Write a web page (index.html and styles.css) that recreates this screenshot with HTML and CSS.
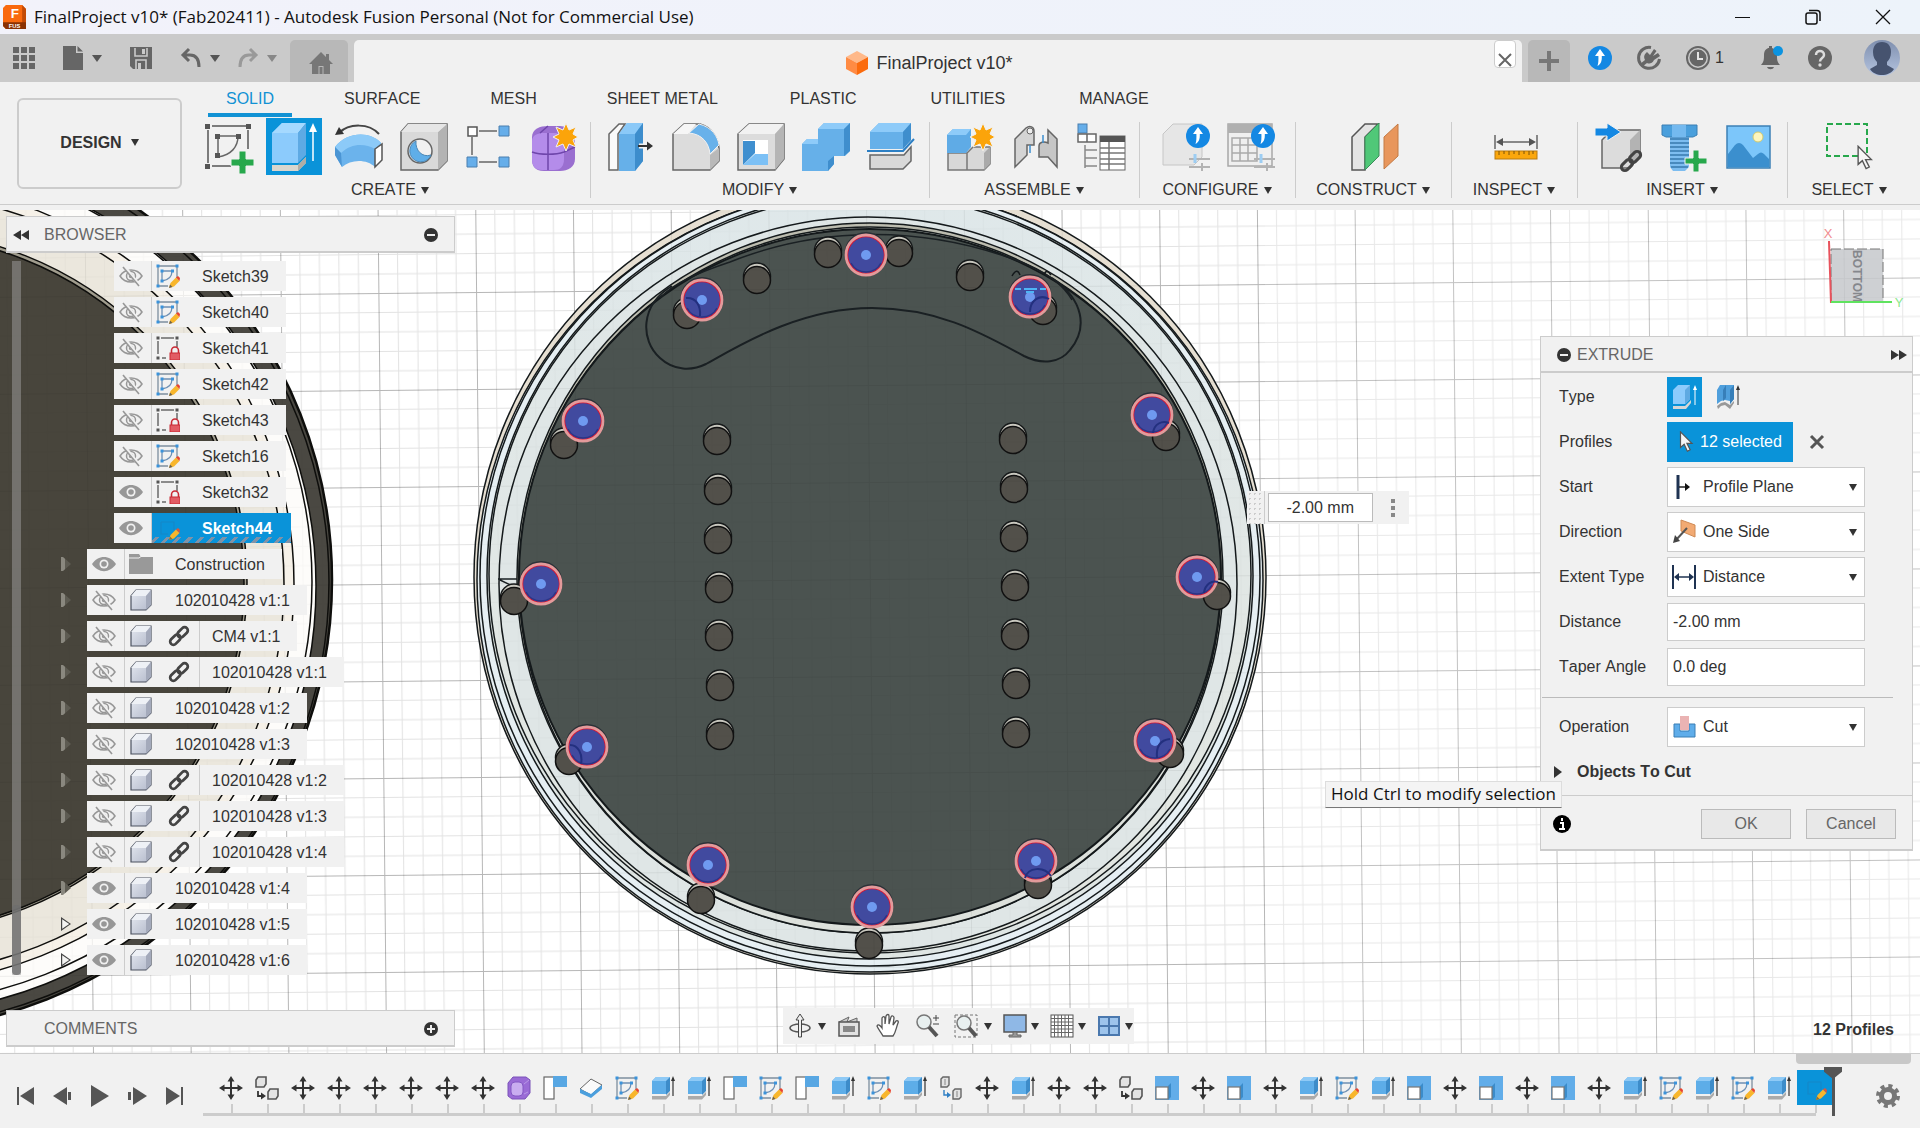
FILE: index.html
```html
<!DOCTYPE html>
<html lang="en">
<head>
    <meta charset="UTF-8">
    <title>FinalProject v10* (Fab202411) - Autodesk Fusion Personal (Not for Commercial Use)</title>
    <link rel="stylesheet" href="styles.css">
</head>
<body>
    <!-- Icon library -->
    <svg class="icon-library" aria-hidden="true">
        <defs>
            <linearGradient id="boxShade" x1="0" y1="0" x2="1" y2="1">
                <stop offset="0" stop-color="#e4e8f0"/>
                <stop offset="1" stop-color="#b4bacb"/>
            </linearGradient>
            <linearGradient id="avatarShade" x1="0" y1="0" x2="0" y2="1">
                <stop offset="0" stop-color="#7f8fae"/>
                <stop offset="1" stop-color="#b5c4e0"/>
            </linearGradient>
        </defs>

        <!-- small icons, 24 x 24 -->
        <symbol id="i-eye" viewBox="0 0 24 24">
            <path d="M0 12C6 2.500 18 2.500 24 12C18 21.500 6 21.500 0 12Z" fill="#979797"/>
            <circle cx="12" cy="12" r="4.500" fill="#f1f1f1"/>
            <circle cx="12" cy="12" r="2.800" fill="#979797"/>
        </symbol>
        <symbol id="i-eye-off" viewBox="0 0 24 24">
            <g fill="none" stroke="#979797" stroke-width="1.500">
                <path d="M1 12C6 4 18 4 23 12C18 20 6 20 1 12Z"/>
                <circle cx="12" cy="12" r="4.500"/>
                <circle cx="12" cy="12" r="1.500"/>
            </g>
            <path d="M5 2L21 22" stroke="#f1f1f1" stroke-width="3"/>
            <path d="M4 3L20 22" stroke="#979797" stroke-width="1.600"/>
        </symbol>
        <symbol id="i-sketch" viewBox="0 0 24 24">
            <path d="M2 2H21V14M2 2V22H12" fill="none" stroke="#7d8f9f" stroke-width="1.300"/>
            <path d="M6 7H16C16 12 13 16 6 17Z" fill="none" stroke="#6d8fb3" stroke-width="1.300"/>
            <g fill="#3b93db"><path d="M0.500 0.500h3v3h-3zM19.500 0.500h3v3h-3zM0.500 20.500h3v3h-3zM4.500 5.500h3v3h-3zM15 5.500h3v3h-3zM4.500 15.500h3v3h-3z"/></g>
            <path d="M13 24L14.500 19L20 13.500L23.500 17L18 22.500Z" fill="#f8b62c"/>
            <path d="M13 24L14 20.500L16.500 23Z" fill="#6b6250"/>
            <path d="M20 13.500L22 12L24 14L23.500 17Z" fill="#e8442f"/>
        </symbol>
        <symbol id="i-sketch-active" viewBox="0 0 24 24">
            <path d="M5 6H18V14M5 6V18H12" fill="none" stroke="#1488c8" stroke-width="1.200"/>
            <path d="M13 24L14.500 19L20 13.500L23.500 17L18 22.500Z" fill="#f8b62c"/>
            <path d="M13 24L14 20.500L16.500 23Z" fill="#8a6d3a"/>
            <path d="M20 13.500L22 12L24 14L23.500 17Z" fill="#d9583f"/>
        </symbol>
        <symbol id="i-locked" viewBox="0 0 24 24">
            <path d="M5 2H18M21 5V11M2 5V18M6 22H10" fill="none" stroke="#6a6a6a" stroke-width="1.500"/>
            <path d="M0.500 0.500h3v3h-3zM19.500 0.500h3v3h-3zM0.500 20.500h3v3h-3z" fill="#555"/>
            <path d="M15.500 17V14.500a3.500 3.500 0 0 1 7 0V17" fill="none" stroke="#c92a35" stroke-width="1.600"/>
            <rect x="14" y="17" width="10" height="7" fill="#e25c64" stroke="#c92a35"/>
        </symbol>
        <symbol id="i-folder" viewBox="0 0 24 24">
            <path d="M0 2H10L12 5H24V22H0Z" fill="#999"/>
            <path d="M0 6H10L12 4.500" fill="none" stroke="#f1f1f1"/>
        </symbol>
        <symbol id="i-box" viewBox="0 0 24 24">
            <path d="M2 8L7 2H22V17L17 22H2Z" fill="url(#boxShade)" stroke="#4c5260" stroke-width="1.200"/>
            <path d="M2 8L7 2H22L17 8Z" fill="#eef1f6"/>
            <path d="M17 8L22 2V17L17 22Z" fill="#a4aabb"/>
        </symbol>
        <symbol id="i-link" viewBox="0 0 24 24">
            <g fill="none" stroke="#444" stroke-width="3">
                <rect x="9.500" y="4.500" width="13" height="7" rx="3.500" transform="rotate(-45 16 8)"/>
                <rect x="1.500" y="12.500" width="13" height="7" rx="3.500" transform="rotate(-45 8 16)"/>
            </g>
        </symbol>
        <symbol id="i-move" viewBox="0 0 24 24">
            <path d="M12 4V20M4 12H20" stroke="#333" stroke-width="2"/>
            <path d="M12 0L15.500 5.500H8.500ZM12 24L15.500 18.500H8.500ZM0 12L5.500 8.500V15.500ZM24 12L18.500 8.500V15.500Z" fill="#333"/>
        </symbol>
        <symbol id="i-copy" viewBox="0 0 24 24">
            <path d="M1 4L3 1H11V8L9 11H1ZM13 16L15 13H23V20L21 23H13Z" fill="#e3e3e3" stroke="#555" stroke-width="1.600"/>
            <path d="M3 15V20H7" fill="none" stroke="#333" stroke-width="1.800"/>
            <path d="M6 16.500L11 20L6 23.500Z" fill="#333"/>
        </symbol>
        <symbol id="i-joint" viewBox="0 0 24 24">
            <path d="M2 3L4 1H10V9L8 11H2ZM14 15L16 13H22V21L20 23H14Z" fill="#e3e3e3" stroke="#666" stroke-width="1.400"/>
            <path d="M6 3V9M18 15V21" stroke="#888"/>
            <path d="M5 14V19H8" fill="none" stroke="#2f7fc4" stroke-width="1.400"/>
            <path d="M8 16L12 19L8 22Z" fill="#2f7fc4"/>
        </symbol>
        <symbol id="i-form" viewBox="0 0 24 24">
            <path d="M1 7L6 1H19L23 4V17L18 23H5L1 20Z" fill="#9a6bd6" stroke="#7a52b8"/>
            <rect x="4" y="6" width="12" height="14" rx="4" fill="#c9adf0" stroke="#8458c4"/>
            <path d="M17 8L22 4M17 18L21 16" stroke="#b899e6" fill="none"/>
        </symbol>
        <symbol id="i-corner" viewBox="0 0 24 24">
            <rect x="1" y="1" width="10" height="22" fill="#fff" stroke="#666" stroke-width="1.200"/>
            <rect x="10" y="0" width="14" height="11" fill="#58a7e3"/>
        </symbol>
        <symbol id="i-plane" viewBox="0 0 24 24">
            <path d="M1 13L12 3L23 9L12 19Z" fill="#fafafa" stroke="#666"/>
            <path d="M1 13L12 18V22L1 17ZM12 18L23 9V13L12 22Z" fill="#4b9fdd"/>
        </symbol>
        <symbol id="i-extrude" viewBox="0 0 24 24">
            <path d="M1 5L5 1H19L15 5V18H1Z" fill="#5dade8"/>
            <path d="M1 5L5 1H19L15 5Z" fill="#8fcaf6"/>
            <path d="M15 5L19 1V15L15 19Z" fill="#3d8cc9"/>
            <path d="M1 20H15L19 16V19L15 23.500H1Z" fill="#aaa"/>
            <path d="M22 4V20" stroke="#333" stroke-width="1.200"/>
            <path d="M22 0L24 5H20Z" fill="#333"/>
        </symbol>
        <symbol id="i-scale" viewBox="0 0 24 24">
            <rect width="24" height="24" fill="#62ade9"/>
            <path d="M13 10L16 7V21L13 24Z" fill="#3b8ccb"/>
            <rect x="1" y="11" width="12" height="12" fill="#fff" stroke="#777" stroke-width="1.200"/>
        </symbol>
        <symbol id="i-up" viewBox="0 0 24 24">
            <circle cx="12" cy="12" r="12" fill="#1488e3"/>
            <path d="M12 3L17 10H13.800C14 15 13 18 9.500 20C10.500 17 10.500 14 10.400 10H7Z" fill="#fff"/>
        </symbol>
        <symbol id="i-minus-dot" viewBox="0 0 14 14">
            <circle cx="7" cy="7" r="7" fill="#333"/><path d="M3 7H11" stroke="#eee" stroke-width="2"/>
        </symbol>
        <symbol id="i-plus-dot" viewBox="0 0 14 14">
            <circle cx="7" cy="7" r="7" fill="#333"/><path d="M3 7H11M7 3V11" stroke="#eee" stroke-width="2"/>
        </symbol>
        <symbol id="i-cursor" viewBox="0 0 16 24">
            <path d="M2 1V18L6 14.500L9.500 22L12.500 20.500L9 13.500H14.500Z" fill="#f6f6f6" stroke="#555" stroke-width="1.300"/>
        </symbol>

        <!-- parts of the model, centred on 0,0 -->
        <g id="m-hole">
            <circle cy="-3.500" r="13.500" fill="#c9c8bf" stroke="#16191a" stroke-width="1.500"/>
            <circle r="13.500" fill="#52504a" stroke="#111" stroke-width="1.500"/>
        </g>
        <g id="m-profile">
            <circle r="20" cy="-1.500" fill="none" stroke="#2c3137" stroke-width="3"/>
            <circle r="20" fill="#dc1430" stroke="#e39a9b" stroke-width="2.800"/>
            <circle r="17.800" fill="#414a9f"/>
            <path d="M-15 8A17 17 0 0 0 15 8" fill="none" stroke="#2c3585" stroke-width="1.500"/>
            <circle r="5" fill="#6f9af0"/>
        </g>
    </svg>

    <header class="title-bar">
        <svg class="app-icon" viewBox="0 0 24 26">
            <path d="M3 0H20L24 4V25H3L0 22V3Z" fill="#f9690e"/>
            <path d="M20 0L24 4V25L20 19Z" fill="#c24a06"/>
            <path d="M0 18H24V25H3L0 22Z" fill="#8a3203"/>
            <text x="8" y="14" class="app-letter">F</text>
            <text x="6" y="24" class="app-sub">FUS</text>
        </svg>
        <h1>FinalProject v10* (Fab202411) - Autodesk Fusion Personal (Not for Commercial Use)</h1>
        <div class="window-controls">
            <button aria-label="Minimize"><svg viewBox="0 0 16 16"><path d="M0 8.500H15" stroke="#111"/></svg></button>
            <button aria-label="Restore"><svg viewBox="0 0 16 16"><rect x="1" y="4" width="11" height="11" rx="2" fill="none" stroke="#111" stroke-width="1.500"/><path d="M4 1.500H12Q15 1.500 15 4.500V12" fill="none" stroke="#111" stroke-width="1.500"/></svg></button>
            <button aria-label="Close window"><svg viewBox="0 0 16 16"><path d="M1 1L15 15M15 1L1 15" stroke="#111" stroke-width="1.300"/></svg></button>
        </div>
    </header>

    <nav class="app-bar">
        <div class="quick-access">
            <button class="qa-grid" aria-label="Data panel"><svg width="22" height="22" viewBox="0 0 22 22"><path d="M0 0h6v6H0zM8 0h6v6H8zM16 0h6v6h-6zM0 8h6v6H0zM8 8h6v6H8zM16 8h6v6h-6zM0 16h6v6H0zM8 16h6v6H8zM16 16h6v6h-6z" fill="#666"/></svg></button>
            <button class="qa-file" aria-label="File"><svg width="20" height="24" viewBox="0 0 20 24"><path d="M0 0H13V7H20V24H0ZM14.500 0L20 5.500H14.500Z" fill="#666"/></svg><span class="caret"></span></button>
            <button class="qa-save" aria-label="Save"><svg width="22" height="22" viewBox="0 0 22 22"><path d="M0 0H22V22H3L0 19Z" fill="#666"/><path d="M5 1V9H17V1M6 22V13H16V22" fill="none" stroke="#cacaca" stroke-width="1.600"/><path d="M12 2h3v5h-3zM8 16h3v6H8z" fill="#cacaca"/></svg></button>
            <button class="qa-undo" aria-label="Undo"><svg width="20" height="20" viewBox="0 0 20 20"><path d="M8 1L2 7L8 13M2 7H9C15 7 18 11 18 19" fill="none" stroke="#666" stroke-width="3"/></svg><span class="caret"></span></button>
            <button class="qa-redo" aria-label="Redo"><svg width="20" height="20" viewBox="0 0 20 20"><path d="M12 1L18 7L12 13M18 7H11C5 7 2 11 2 19" fill="none" stroke="#999" stroke-width="3"/></svg><span class="caret"></span></button>
        </div>
        <button class="home-tab" aria-label="Home"><svg width="24" height="22" viewBox="0 0 24 22"><path d="M12 0L17 5V2H20V8L24 12H21V22H14.500V14H9.500V22H3V12H0Z" fill="#777"/><rect x="10.500" y="15" width="3" height="7" fill="#777"/></svg></button>
        <div class="doc-tab">
            <svg width="22" height="24" viewBox="0 0 22 24"><path d="M11 0L22 6L11 12L0 6Z" fill="#ffb98a"/><path d="M0 6L11 12V24L0 18Z" fill="#ff8b43"/><path d="M22 6L11 12V24L22 18Z" fill="#fb6b0d"/></svg>
            <span class="doc-name">FinalProject v10*</span>
            <button class="doc-close" aria-label="Close document"><svg width="14" height="14" viewBox="0 0 14 14"><path d="M1 1L13 13M13 1L1 13" stroke="#666" stroke-width="2"/></svg></button>
        </div>
        <button class="new-tab" aria-label="New tab"><svg width="20" height="20" viewBox="0 0 20 20"><path d="M10 0V20M0 10H20" stroke="#777" stroke-width="4"/></svg></button>
        <div class="app-tools">
            <button aria-label="Upgrade"><svg width="24" height="24"><use href="#i-up"/></svg></button>
            <button aria-label="Extensions"><svg width="24" height="24" viewBox="0 0 24 24"><path d="M14 1.500A10.500 10.500 0 1 0 22.500 13" fill="none" stroke="#666" stroke-width="3"/><path d="M3 18L8 14C6 10 8 8 10 6L13 9L17 3L19.500 5L16 10L21 7L23 10L17 14C15 18 12 18 10 17L5 21Z" fill="#666"/></svg></button>
            <button class="jobs" aria-label="Job status"><svg width="24" height="24" viewBox="0 0 24 24"><circle cx="12" cy="12" r="11" fill="none" stroke="#666" stroke-width="2"/><circle cx="12" cy="12" r="8.500" fill="#666"/><path d="M12 6V13H17" fill="none" stroke="#e4e4e4" stroke-width="2"/></svg><span>1</span></button>
            <button class="bell" aria-label="Notifications"><svg width="24" height="24" viewBox="0 0 24 24"><path d="M2 19C5 16 5 13 5 9C5 4 8 2 10 2V0H13V2C16 3 18 5 18 9C18 13 18 16 21 19ZM8 21H15C14 24 9 24 8 21Z" fill="#666"/><circle cx="19" cy="5" r="5" fill="#0b93e0"/></svg></button>
            <button class="help" aria-label="Help"><svg width="24" height="24" viewBox="0 0 24 24"><circle cx="12" cy="12" r="12" fill="#666"/><path d="M8 9C8 3.500 16 3.500 16 9C16 12 12 12 12 15.500" fill="none" stroke="#ddd" stroke-width="2.500"/><circle cx="12" cy="19" r="1.700" fill="#ddd"/></svg></button>
            <button class="avatar" aria-label="Account"><svg width="36" height="36" viewBox="0 0 36 36"><circle cx="18" cy="18" r="18" fill="url(#avatarShade)"/><path d="M18 2C24 2 27 6 27 12C27 17 25 20 23 22V25L30 29C25 37 11 37 6 29L13 25V22C11 20 9 17 9 12C9 6 12 2 18 2Z" fill="#46536f"/></svg></button>
        </div>
    </nav>

    <section class="ribbon">
        <button class="workspace">DESIGN <span class="caret"></span></button>
        <div class="ribbon-main">
            <div class="ribbon-tabs">
                <a href="#" class="active">SOLID</a>
                <a href="#">SURFACE</a>
                <a href="#">MESH</a>
                <a href="#">SHEET METAL</a>
                <a href="#" class="wide">PLASTIC</a>
                <a href="#" class="wide">UTILITIES</a>
                <a href="#" class="wide">MANAGE</a>
            </div>
            <div class="groups">
                <div class="group">
                    <div class="tools">
                        <button aria-label="Create sketch"><svg viewBox="0 0 48 48"><path d="M7 3H41M43 7V26M3 7V40M7 43H26" fill="none" stroke="#555" stroke-width="1.500"/><path d="M13 13H33C33 24 26 32 13 34Z" fill="none" stroke="#666" stroke-width="1.500"/><path d="M0 1h5v5H0zM41 1h5v5h-5zM0 41h5v5H0zM10 11h5v5h-5zM31 11h5v5h-5zM10 30h5v5h-5z" fill="#555"/><path d="M34 28h7v8h8v7h-8v8h-7v-8h-8v-7h8z" fill="#27a84c" stroke="#f1f1f1"/></svg></button>
                        <button class="active" aria-label="Extrude"><svg viewBox="0 0 48 48"><path d="M2 10L12 0H36L28 10V40H2Z" fill="#8ccbfc"/><path d="M2 10L12 0H36L28 10Z" fill="#a5d9ff"/><path d="M28 10L36 0V32L28 40Z" fill="#5eaae4"/><path d="M2 42H28L36 34V40L28 48H2Z" fill="#d9d6ce"/><path d="M28 42L36 34V40L28 48Z" fill="#b0ada6"/><path d="M43 7V38" stroke="#fff" stroke-width="1.500"/><path d="M43 0L47 9H39Z" fill="#fff"/></svg></button>
                        <button aria-label="Revolve"><svg viewBox="0 0 48 48"><path d="M4 10C14 0 34 0 44 11" fill="none" stroke="#444" stroke-width="2"/><path d="M0 12L4 4L9 11Z" fill="#333"/><path d="M0 24C12 8 36 8 46 20L40 44C32 36 16 36 7 44L0 32Z" fill="#6bb3ec"/><path d="M0 24C12 8 36 8 46 20L40 26C30 20 16 20 6 30Z" fill="#8ccaf8"/><path d="M0 24L6 30L7 44L0 32Z" fill="#4b95d4"/><path d="M40 26L47 21V37L40 44Z" fill="#fff" stroke="#555" stroke-width="1.500"/></svg></button>
                        <button aria-label="Hole"><svg viewBox="0 0 48 48"><path d="M1 9L8 1H47V38L38 47H1Z" fill="#d9d9d9" stroke="#666" stroke-width="1.500"/><path d="M38 9L47 1V38L38 47Z" fill="#b3b3b3"/><path d="M1 9L8 1H47L38 9Z" fill="#e6e6e6"/><circle cx="20" cy="28" r="12" fill="#f1f1f1" stroke="#666" stroke-width="1.500"/><path d="M16 18C15 27 22 35 31 32A11 11 0 1 1 16 18Z" fill="#5faee8" stroke="#4b87b5"/></svg></button>
                        <button aria-label="Pattern"><svg viewBox="0 0 48 48"><path d="M14 8H32M7 14V32M14 39H32" stroke="#666" stroke-width="1.500"/><rect x="3" y="4" width="9" height="9" fill="#fff" stroke="#555" stroke-width="1.500"/><path d="M34 3h10v10H34zM2 34h10v10H2zM34 34h10v10H34z" fill="#66aeea" stroke="#4a7fae"/></svg></button>
                        <button aria-label="Create form"><svg viewBox="0 0 48 48"><path d="M2 14C2 6 10 3 18 3H30C40 3 45 12 45 22V36C45 44 38 48 30 48H14C4 48 2 42 2 36Z" fill="#9a6fd0"/><path d="M2 18C2 12 8 10 14 10H24C32 10 34 14 34 20V36C34 44 30 47 24 47H12C4 47 2 42 2 36Z" fill="#b48cea"/><path d="M2 29C10 32 26 32 34 29L45 24M18 10V47M10 10L18 3M28 11L36 5" fill="none" stroke="#6f46ab" stroke-width="1.500"/><path d="M36 0L39 7L46 4L43 11L48 14L43 17L46 24L39 21L36 28L33 21L26 24L29 17L23 14L29 11L26 4L33 7Z" fill="#fba40a" stroke="#f1f1f1"/></svg></button>
                    </div>
                    <button class="group-label">CREATE <span class="caret"></span></button>
                </div>
                <div class="group">
                    <div class="tools">
                        <button aria-label="Press pull"><svg viewBox="0 0 48 48"><path d="M2 11L12 1H18L11 11V47H2Z" fill="#fafafa" stroke="#666" stroke-width="1.500"/><path d="M12 11L20 0H36V38L28 48H12Z" fill="#66b0e9"/><path d="M12 11L20 0H36L28 11Z" fill="#8bc9f8"/><path d="M28 11L36 0V38L28 48Z" fill="#3d8dcc"/><path d="M32 23H42" stroke="#f1f1f1" stroke-width="5"/><path d="M31 23H42" stroke="#333" stroke-width="2"/><path d="M40 18.500L46 23L40 27.500Z" fill="#333"/></svg></button>
                        <button aria-label="Fillet"><svg viewBox="0 0 48 48"><path d="M1 11L12 1H28C40 4 46 16 47 25V38L38 47H1Z" fill="#dcdcdc" stroke="#666" stroke-width="1.500"/><path d="M1 11L12 1H24L16 11Z" fill="#f6f6f6"/><path d="M38 32L47 25V38L38 47Z" fill="#b9b9b9"/><path d="M17 10L27 1C40 4 46 14 47 22L38 31C37 20 30 11 17 10Z" fill="#68b1ea" stroke="#f1f1f1"/></svg></button>
                        <button aria-label="Shell"><svg viewBox="0 0 48 48"><path d="M1 11L12 1H47V36L38 47H1Z" fill="#dcdcdc" stroke="#666" stroke-width="1.500"/><path d="M1 11L12 1H47L38 11Z" fill="#f2f2f2"/><path d="M38 11L47 1V36L38 47Z" fill="#b5b5b5"/><rect x="6" y="17" width="25" height="25" fill="#fff"/><path d="M6 18H18V30L6 42Z" fill="#3f8fcf"/><path d="M6 42L18 31H31V42Z" fill="#7cc0f5"/></svg></button>
                        <button aria-label="Combine"><svg viewBox="0 0 48 48"><path d="M0 21L5 16H16V6L22 0H48V28L43 33H32V41L26 48H0Z" fill="#66b0e9"/><path d="M16 6L22 0H48L42 6ZM0 21L5 16H16V21Z" fill="#8ecbf9"/><path d="M42 6L48 0V28L42 33ZM26 38L32 33V41L26 48Z" fill="#3f8ecd"/></svg></button>
                        <button aria-label="Split body"><svg viewBox="0 0 48 48"><path d="M3 9L12 0H44V17L36 26H3Z" fill="#66b0e9"/><path d="M3 9L12 0H44L36 9Z" fill="#8ecbf9"/><path d="M36 9L44 0V17L36 26Z" fill="#3f8ecd"/><path d="M0 28H36L47 16" fill="none" stroke="#2c7fc4" stroke-width="2"/><path d="M3 32H37L44 24V38L36 46H3Z" fill="#d8d8d8" stroke="#666" stroke-width="1.500"/></svg></button>
                    </div>
                    <button class="group-label">MODIFY <span class="caret"></span></button>
                </div>
                <div class="group">
                    <div class="tools">
                        <button aria-label="New component"><svg viewBox="0 0 48 48"><path d="M1 30H20V47H1ZM20 30L26 24H43V41L37 47H20Z" fill="#d8d8d8" stroke="#777" stroke-width="1.500"/><path d="M37 30L43 24V41L37 47Z" fill="#aaa"/><path d="M0 12L6 6H24V24L19 30H0Z" fill="#5fabe6"/><path d="M0 12L6 6H24L19 12Z" fill="#8ecbf9"/><path d="M36 0L39 7L46 4L43 11L48 14L43 17L46 24L39 21L36 28L33 21L26 24L29 17L23 14L29 11L26 4L33 7Z" fill="#fba40a" stroke="#f1f1f1"/></svg></button>
                        <button aria-label="Joint"><svg viewBox="0 0 48 48"><path d="M3 16L14 5C18 2 22 4 22 8V22H15V32L3 44Z" fill="#d4d4d4" stroke="#666" stroke-width="1.500"/><path d="M45 16L36 7V20C32 18 27 19 27 23V34L36 34L45 44Z" fill="#c6c6c6" stroke="#666" stroke-width="1.500"/><circle cx="18" cy="8" r="3" fill="#eee" stroke="#666"/><path d="M18 22V30M31 12V20" stroke="#3d8fd0" stroke-width="1.500"/></svg></button>
                        <button aria-label="Bill of materials"><svg viewBox="0 0 48 48"><rect x="1" y="1" width="9" height="9" fill="#66aeea" stroke="#4a7fae"/><path d="M1 11H10V19H1ZM10 11H19V19H10Z" fill="#fff" stroke="#666" stroke-width="1.500"/><path d="M8 22V45M8 27H20M8 35H20M8 43H20" stroke="#888" stroke-width="1.500"/><rect x="23" y="13" width="25" height="34" fill="#fff" stroke="#666"/><rect x="23" y="13" width="25" height="6" fill="#555"/><path d="M23 25H48M23 30H48M23 36H48M23 41H48M32 19V47" stroke="#777" stroke-width="1.500"/></svg></button>
                    </div>
                    <button class="group-label">ASSEMBLE <span class="caret"></span></button>
                </div>
                <div class="group">
                    <div class="tools">
                        <button aria-label="Configure model"><svg viewBox="0 0 48 48"><path d="M1 11L11 1H40V34L32 42H1Z" fill="#e6e6e6" stroke="#c6c6c6"/><path d="M27 36H48M40 40V48M27 44H48" stroke="#b3b3b3" stroke-width="2"/><path d="M33 31V40" stroke="#9dcdf2" stroke-width="3"/><use href="#i-up" x="24" y="1" width="24" height="24"/></svg></button>
                        <button aria-label="Configuration table"><svg viewBox="0 0 48 48"><rect x="1" y="1" width="44" height="42" fill="#efefef" stroke="#a8a8a8" stroke-width="1.500"/><rect x="1" y="1" width="44" height="9" fill="#b0b0b0"/><path d="M5 15H30V38H5ZM5 22H30M5 30H30M13 15V38M21 15V38" fill="none" stroke="#aaa" stroke-width="1.500"/><path d="M27 36H48M27 44H48M40 40V48" stroke="#b3b3b3" stroke-width="2"/><path d="M34 31V40" stroke="#9dcdf2" stroke-width="3"/><use href="#i-up" x="24" y="1" width="24" height="24"/></svg></button>
                    </div>
                    <button class="group-label">CONFIGURE <span class="caret"></span></button>
                </div>
                <div class="group">
                    <div class="tools">
                        <button aria-label="Offset plane"><svg viewBox="0 0 48 48"><path d="M1 14L14 1H27L14 14V47H1Z" fill="#e4e4e4" stroke="#555" stroke-width="1.500"/><path d="M14 14L28 0V33L14 47Z" fill="#50c878" stroke="#3a8d58"/><path d="M33 14L47 1V33L33 46Z" fill="#e8965c" stroke="#c37a45"/></svg></button>
                    </div>
                    <button class="group-label">CONSTRUCT <span class="caret"></span></button>
                </div>
                <div class="group">
                    <div class="tools">
                        <button aria-label="Measure"><svg viewBox="0 0 48 48"><path d="M3 12V26M45 12V26M8 19H40" stroke="#666" stroke-width="1.500"/><path d="M4 19L11 15V23ZM44 19L37 15V23Z" fill="#555"/><rect x="3" y="28" width="42" height="8" fill="#fba70c" stroke="#b97a10"/><path d="M7 28V32M12 28V31M17 28V32M22 28V31M27 28V32M32 28V31M37 28V32M41 28V31" stroke="#7a5208"/></svg></button>
                    </div>
                    <button class="group-label">INSPECT <span class="caret"></span></button>
                </div>
                <div class="group">
                    <div class="tools">
                        <button aria-label="Insert derive"><svg viewBox="0 0 48 48"><path d="M7 17L17 7H45V32L35 45H7Z" fill="#dcdcdc" stroke="#666" stroke-width="1.500"/><path d="M35 17L45 7V32L35 45Z" fill="#b3b3b3"/><path d="M0 5H12V0L26 9L12 18V13H0Z" fill="#1488e3" stroke="#f1f1f1"/><use href="#i-link" x="24" y="26" width="24" height="24"/></svg></button>
                        <button aria-label="Insert fastener"><svg viewBox="0 0 48 48"><path d="M10 12H29V44L25 48H13L10 44Z" fill="#7dbdf0"/><path d="M10 16H29M10 20H29M10 24H29M10 28H29M10 32H29M10 36H29M10 40H29M11 44H28" stroke="#3779ad" stroke-width="1.500"/><path d="M2 2H37V12L33 14H6L2 12Z" fill="#4a9fdc" stroke="#3b7fb3"/><path d="M12 2h14v12H12z" fill="#74b9ef"/><path d="M33 27h6v8h8v6h-8v8h-6v-8h-8v-6h8z" fill="#27a84c" stroke="#f1f1f1"/></svg></button>
                        <button aria-label="Insert decal"><svg viewBox="0 0 48 48"><rect x="2" y="3" width="43" height="42" fill="#7cc6fa" stroke="#3d80b5" stroke-width="1.500"/><path d="M3 31L10 22Q14 18 18 22L28 35L33 31Q36 28 39 31L44 36V44H3Z" fill="#3b8fce"/><circle cx="33" cy="14" r="5" fill="#fdf6bd" stroke="#d2c96e"/></svg></button>
                    </div>
                    <button class="group-label">INSERT <span class="caret"></span></button>
                </div>
                <div class="group">
                    <div class="tools">
                        <button aria-label="Select"><svg viewBox="0 0 48 48"><rect x="0" y="1" width="40" height="32" fill="none" stroke="#27a84c" stroke-width="2" stroke-dasharray="6 3"/><use href="#i-cursor" x="29" y="22" width="17" height="26"/></svg></button>
                    </div>
                    <button class="group-label">SELECT <span class="caret"></span></button>
                </div>
            </div>
        </div>
    </section>

    <main class="viewport">
        <svg class="canvas" viewBox="0 210 1920 843" preserveAspectRatio="xMidYMid slice">
            <defs>
                <pattern id="grid" width="97.700" height="97" patternUnits="userSpaceOnUse" patternTransform="translate(183 295) rotate(-0.58)">
                    <path d="M19.500 0V97M39 0V97M58.500 0V97M78 0V97M0 19.500H98M0 39H98M0 58.500H98M0 78H98" stroke="#000" stroke-opacity=".09"/>
                    <path d="M0.500 0V97M0 0.500H98" stroke="#000" stroke-opacity=".24"/>
                </pattern>
                <linearGradient id="rim" x1="0" y1="0" x2="0" y2="1">
                    <stop offset="0" stop-color="#dfe8ea"/>
                    <stop offset="1" stop-color="#e3e6e0"/>
                </linearGradient>
            </defs>
            <rect y="210" width="1920" height="843" fill="#fff"/>
            <rect y="210" width="1920" height="843" fill="url(#grid)"/>

            <!-- neighbouring part, cut off by the left edge -->
            <g stroke="#0e0e0c" stroke-width="1.500">
                <circle cx="-119" cy="580" r="451" fill="#4a4842" stroke-width="2.500"/>
                <circle cx="-116" cy="582" r="445" fill="none"/>
                <circle cx="-112" cy="586" r="428" fill="#fdfcfa"/>
                <circle cx="-110" cy="582" r="422" fill="none"/>
                <circle cx="-106" cy="584" r="400" fill="#f6f1e8"/>
                <circle cx="-106" cy="584" r="390" fill="#ebe7dd"/>
                <circle cx="-104" cy="582" r="351" fill="#a19d8e"/>
                <circle cx="-104" cy="583" r="348" fill="#48453c"/>
            </g>

            <!-- enclosure ring -->
            <g stroke="#14191b" stroke-width="1.500">
                <ellipse cx="870" cy="577" rx="396" ry="397" fill="#e6dfd2"/>
                <ellipse cx="870" cy="580" rx="393" ry="392" fill="#e6eff3"/>
                <ellipse cx="870" cy="577" rx="390" ry="389" fill="#e6eff3"/>
                <ellipse cx="870" cy="576" rx="383" ry="383" fill="#dfe6e4"/>
                <ellipse cx="870" cy="574" rx="381" ry="379" fill="url(#rim)"/>
                <ellipse cx="868" cy="584" rx="369" ry="367" fill="#dfe6e6"/>
                <ellipse cx="870" cy="578" rx="353" ry="355" fill="#bdbdb0"/>
                <ellipse cx="870" cy="580" rx="351" ry="353" fill="#dde1dc"/>
                <ellipse cx="870" cy="577" rx="351" ry="348" fill="#4b5350" stroke-width="2"/>
            </g>
            <g fill="none" stroke="#1a2023" stroke-width="1.500">
                <path d="M660 298C675 282 700 272 730 262C820 226 920 226 1010 258C1040 268 1062 282 1072 300"/>
                <path d="M672 286C640 305 640 340 660 358C674 371 692 371 706 364C740 345 800 308 872 308C940 308 985 335 1024 356C1042 365 1060 363 1070 350C1088 328 1084 300 1052 278" stroke-width="2"/>
                <path d="M498 579H517M500 580L517 588"/>
            </g>
            <g id="holes"></g>

            <!-- grid shows faintly through the parts -->
            <rect y="210" width="1265" height="843" fill="url(#grid)" opacity=".25"/>

            <g id="profiles"></g>
            <!-- hole edges seen through the selected profiles -->
            <g fill="none" stroke="#23307f" stroke-width="2">
                <path d="M686 298C696 297 701 306 700 316"/>
                <path d="M1030 312C1030 300 1040 294 1049 299"/>
                <path d="M1153 433C1154 424 1162 420 1169 423"/>
                <path d="M1204 593C1205 584 1212 580 1218 582"/>
                <path d="M570 745C578 745 583 754 581 764"/>
                <path d="M1025 878C1028 867 1044 866 1051 876"/>
                <path d="M1157 758C1156 747 1160 740 1170 739"/>
            </g>
            <path d="M1015 289H1021M1024 289H1037M1040 289H1046M1026 292H1034" stroke="#4fb4f5" stroke-width="2"/>
            <path d="M1012 276Q1017 267 1020 275M1044 275Q1046 268 1051 275" fill="none" stroke="#14191b" stroke-width="1.500"/>

            <!-- view cube -->
            <rect x="1831" y="249" width="52" height="53" fill="#c6c8cb" fill-opacity=".85" stroke="#777" stroke-dasharray="10 3"/>
            <text class="cube-face" x="1856" y="276" transform="rotate(90 1856 276)">BOTTOM</text>
            <path d="M1829 241L1831 303" stroke="#e8525c" stroke-width="2"/>
            <path d="M1831 302H1892" stroke="#5fe35f" stroke-width="2"/>
            <text class="axis axis-x" x="1828" y="238">X</text>
            <text class="axis axis-y" x="1899" y="307">Y</text>
        </svg>

        <aside class="browser">
            <div class="panel-head">
                <button aria-label="Collapse browser"><svg width="16" height="10" viewBox="0 0 16 10"><path d="M8 0V10L0 5ZM16 0V10L8 5Z" fill="#333"/></svg></button>
                <h2>BROWSER</h2>
                <button aria-label="Hide browser"><svg width="14" height="14"><use href="#i-minus-dot"/></svg></button>
            </div>
            <div class="tree-wrap">
                <ul class="tree" id="tree"></ul>
                <div class="tree-scroll"><div class="tree-thumb"></div></div>
            </div>
            <div class="panel-head comments">
                <h2>COMMENTS</h2>
                <button aria-label="Show comments"><svg width="14" height="14"><use href="#i-plus-dot"/></svg></button>
            </div>
        </aside>

        <div class="value-box">
            <span class="grip"></span>
            <input type="text" value="-2.00 mm" aria-label="Distance value">
            <button aria-label="More options"><svg width="4" height="18" viewBox="0 0 4 18"><path d="M0 0h4v4H0zM0 7h4v4H0zM0 14h4v4H0z" fill="#888"/></svg></button>
        </div>

        <form class="dialog">
            <div class="panel-head">
                <button type="button" aria-label="Collapse dialog"><svg width="14" height="14"><use href="#i-minus-dot"/></svg></button>
                <h2>EXTRUDE</h2>
                <button type="button" aria-label="Dock dialog"><svg width="16" height="10" viewBox="0 0 16 10"><path d="M0 0V10L8 5ZM8 0V10L16 5Z" fill="#333"/></svg></button>
            </div>
            <div class="fields">
                <div class="field">
                    <span class="name">Type</span>
                    <button type="button" class="type active" aria-label="Extrude"><svg viewBox="0 0 24 24"><path d="M0 5L5 0H17V14L12 19H0Z" fill="#8ccbfc"/><path d="M12 5L17 0V14L12 19Z" fill="#5faae2"/><path d="M0 21H12L18 15V18L13 24H0Z" fill="#d6d6d6"/><path d="M22 4V20" stroke="#fff"/><path d="M22 0L24 5H20Z" fill="#fff"/></svg></button>
                    <button type="button" class="type" aria-label="Thin extrude"><svg viewBox="0 0 24 24"><path d="M1 5L4 0H18V14L14 19V16L9 15L5 16L1 19Z" fill="#4f9fdc"/><path d="M7 5L10 0V13L7 16ZM14 5L18 0V14L14 19Z" fill="#377fb9"/><path d="M1 21L5 18L9 17L14 20L18 16V18L14 24L9 20L5 21L2 24Z" fill="#999"/><path d="M22 4V20" stroke="#333"/><path d="M22 0L24 5H20Z" fill="#333"/></svg></button>
                </div>
                <div class="field">
                    <span class="name">Profiles</span>
                    <button type="button" class="selection"><svg width="16" height="22"><use href="#i-cursor"/></svg>12 selected</button>
                    <button type="button" class="clear" aria-label="Clear selection"><svg width="14" height="14" viewBox="0 0 14 14"><path d="M1 1L13 13M13 1L1 13" stroke="#555" stroke-width="3"/></svg></button>
                </div>
                <div class="field">
                    <label class="name" for="start">Start</label>
                    <div class="dropdown">
                        <svg viewBox="0 0 24 24"><path d="M6 0V24" stroke="#1f3352" stroke-width="3"/><path d="M7 12H16" stroke="#222" stroke-width="1.500"/><path d="M13 8L18 12L13 16Z" fill="#111"/></svg>
                        <select id="start"><option>Profile Plane</option></select>
                        <span class="caret"></span>
                    </div>
                </div>
                <div class="field">
                    <label class="name" for="direction">Direction</label>
                    <div class="dropdown">
                        <svg viewBox="0 0 24 24"><path d="M9 0L23 5V17L9 11Z" fill="#f2aa73" stroke="#cf8a55"/><path d="M15 8L4 20" stroke="#555" stroke-width="2"/><path d="M1 23L3 15L8 21Z" fill="#444"/></svg>
                        <select id="direction"><option>One Side</option></select>
                        <span class="caret"></span>
                    </div>
                </div>
                <div class="field">
                    <label class="name" for="extent">Extent Type</label>
                    <div class="dropdown">
                        <svg viewBox="0 0 24 24"><path d="M1 0V24M23 0V24" stroke="#1f3352" stroke-width="2"/><path d="M5 12H20" stroke="#1f3352" stroke-width="1.500"/><path d="M2 12L7 8V16ZM22 12L17 8V16Z" fill="#1f3352"/></svg>
                        <select id="extent"><option>Distance</option></select>
                        <span class="caret"></span>
                    </div>
                </div>
                <div class="field">
                    <label class="name" for="distance">Distance</label>
                    <input type="text" id="distance" value="-2.00 mm">
                </div>
                <div class="field">
                    <label class="name" for="taper">Taper Angle</label>
                    <input type="text" id="taper" value="0.0 deg">
                </div>
                <hr>
                <div class="field">
                    <label class="name" for="operation">Operation</label>
                    <div class="dropdown">
                        <svg viewBox="0 0 24 24"><path d="M2 9H8V16H17V9H23V22H2Z" fill="#5fadea" stroke="#3a7fb5"/><rect x="8" y="1" width="9" height="14" fill="#eab3b3"/></svg>
                        <select id="operation"><option>Cut</option></select>
                        <span class="caret"></span>
                    </div>
                </div>
                <button type="button" class="section-toggle"><svg width="8" height="12" viewBox="0 0 8 12"><path d="M0 0V12L8 6Z" fill="#333"/></svg>Objects To Cut</button>
            </div>
            <div class="dialog-foot">
                <svg width="18" height="18" viewBox="0 0 18 18"><circle cx="9" cy="9" r="9" fill="#000"/><path d="M9 3V6M7 8H10V14M6 14H12" fill="none" stroke="#fff" stroke-width="2"/></svg>
                <button type="submit">OK</button>
                <button type="button">Cancel</button>
            </div>
        </form>

        <div class="tooltip" role="tooltip">Hold Ctrl to modify selection</div>

        <div class="nav-bar">
            <button aria-label="Orbit"><svg viewBox="0 0 24 24"><ellipse cx="12" cy="14" rx="10" ry="4" fill="none" stroke="#555" stroke-width="1.500"/><path d="M12 0L16 6H13.500V23H10.500V6H8Z" fill="#eee" stroke="#444"/></svg><span class="caret"></span></button>
            <button aria-label="Look at"><svg viewBox="0 0 24 24"><path d="M2 8L12 3L10 8L20 4V8" fill="#ccc" stroke="#666"/><rect x="2" y="8" width="20" height="14" fill="#e2e2e2" stroke="#555" stroke-width="1.500"/><rect x="6" y="12" width="12" height="6" fill="#888"/></svg></button>
            <button aria-label="Pan"><svg viewBox="0 0 24 24"><path d="M7 22C5 18 2 15 1 12C2 10 4 11 6 14V4C7 2 9 2 9 5V10L10 2C11 0 13 0 13 2V10L15 3C16 1 18 2 18 4L17 11L20 7C21 6 23 7 22 9C20 14 20 18 17 22Z" fill="#fff" stroke="#555" stroke-width="1.300"/></svg></button>
            <button aria-label="Zoom"><svg viewBox="0 0 24 24"><circle cx="9" cy="8" r="7" fill="#e8f0f0" stroke="#777" stroke-width="1.500"/><path d="M14 13L22 22" stroke="#555" stroke-width="4"/><path d="M18 4H24M21 1V7M18 10H24" stroke="#444"/></svg></button>
            <button aria-label="Fit"><svg viewBox="0 0 24 24"><rect x="1" y="1" width="22" height="22" fill="none" stroke="#777" stroke-dasharray="3 2"/><circle cx="10" cy="9" r="7" fill="#e8f0f0" stroke="#777" stroke-width="1.500"/><path d="M15 14L22 22" stroke="#555" stroke-width="4"/></svg><span class="caret"></span></button>
            <button class="tight" aria-label="Display settings"><svg viewBox="0 0 24 24"><rect x="1" y="1" width="22" height="17" fill="#8fb8e6" stroke="#555" stroke-width="1.500"/><path d="M10 18H14V21H18V23H6V21H10Z" fill="#999" stroke="#666"/></svg><span class="caret"></span></button>
            <button class="tight" aria-label="Grid settings"><svg viewBox="0 0 24 24"><rect x="1" y="1" width="22" height="22" fill="#fff" stroke="#555"/><path d="M4.500 1V23M8 1V23M11.500 1V23M15 1V23M18.500 1V23M1 4.500H23M1 8H23M1 11.500H23M1 15H23M1 18.500H23" stroke="#666"/></svg><span class="caret"></span></button>
            <button class="tight" aria-label="Viewports"><svg viewBox="0 0 24 24"><rect x="1" y="2" width="22" height="20" fill="#4a78ae"/><path d="M3 4h8v7H3zM13 4h8v7h-8zM3 13h8v7H3zM13 13h8v7h-8z" fill="#9dc4ec"/></svg><span class="caret"></span></button>
        </div>

        <div class="status">12 Profiles</div>
    </main>

    <footer class="timeline">
        <div class="playback">
            <button aria-label="First"><svg viewBox="0 0 20 20"><path d="M2 1V19" stroke="#555" stroke-width="2"/><path d="M18 1V19L4 10Z" fill="#555"/></svg></button>
            <button aria-label="Step back"><svg viewBox="0 0 20 20"><path d="M14 1V19L0 10Z" fill="#555"/><path d="M15 6h3v8h-3z" fill="#555"/></svg></button>
            <button aria-label="Play"><svg viewBox="0 0 20 20"><path d="M1 -1V21L19 10Z" fill="#555"/></svg></button>
            <button aria-label="Step forward"><svg viewBox="0 0 20 20"><path d="M6 1V19L20 10Z" fill="#555"/><path d="M1 6h3v8H1z" fill="#555"/></svg></button>
            <button aria-label="Last"><svg viewBox="0 0 20 20"><path d="M18 1V19" stroke="#555" stroke-width="2"/><path d="M2 1V19L16 10Z" fill="#555"/></svg></button>
        </div>
        <ol class="features" id="features"></ol>
        <button class="settings" aria-label="Timeline settings"><svg width="24" height="24" viewBox="0 0 24 24"><circle cx="12" cy="12" r="10" fill="none" stroke="#777" stroke-width="4" stroke-dasharray="4 3.854"/><circle cx="12" cy="12" r="6.500" fill="none" stroke="#777" stroke-width="5"/></svg></button>
        <div class="timeline-scroll"></div>
    </footer>

    <script>
        // Browser tree: name, icon, visible, extra classes
        const nodes = [
            { name: 'Sketch39', icon: 'sketch' },
            { name: 'Sketch40', icon: 'sketch' },
            { name: 'Sketch41', icon: 'locked' },
            { name: 'Sketch42', icon: 'sketch' },
            { name: 'Sketch43', icon: 'locked' },
            { name: 'Sketch16', icon: 'sketch' },
            { name: 'Sketch32', icon: 'locked', visible: true },
            { name: 'Sketch44', icon: 'sketch-active', visible: true, selected: true },
            { name: 'Construction', icon: 'folder', visible: true },
            { name: '102010428 v1:1', icon: 'box' },
            { name: 'CM4 v1:1', icon: 'box', linked: true },
            { name: '102010428 v1:1', icon: 'box', linked: true },
            { name: '102010428 v1:2', icon: 'box' },
            { name: '102010428 v1:3', icon: 'box' },
            { name: '102010428 v1:2', icon: 'box', linked: true },
            { name: '102010428 v1:3', icon: 'box', linked: true },
            { name: '102010428 v1:4', icon: 'box', linked: true },
            { name: '102010428 v1:4', icon: 'box', visible: true },
            { name: '102010428 v1:5', icon: 'box', visible: true, light: true },
            { name: '102010428 v1:6', icon: 'box', visible: true, light: true }
        ];

        function icon(name, className) {
            return '<svg class="' + (className || '') + '"><use href="#i-' + name + '"/></svg>';
        }

        const tree = document.getElementById('tree');
        nodes.forEach(node => {
            const item = document.createElement('li');
            const isSketch = node.name.startsWith('Sketch');
            let html = '';
            if (isSketch) {
                item.classList.add('sketch');
            } else {
                html += '<button class="twisty' + (node.light ? ' light' : '') + '" aria-label="Expand"></button>';
            }
            if (node.selected) {
                item.classList.add('selected');
            }
            html += '<div class="node">';
            html += '<button class="eye" aria-label="Toggle visibility">' + icon(node.visible ? 'eye' : 'eye-off') + '</button>';
            html += icon(node.icon, 'kind');
            if (node.linked) {
                html += '<i class="linked">' + icon('link') + '</i>';
            }
            html += '<span>' + node.name + '</span></div>';
            item.innerHTML = html;
            tree.appendChild(item);
        });

        // Model coordinates of the drilled holes and the selected profiles
        const holes = [
            [717, 441], [718, 491], [718, 540], [719, 589], [719, 637], [720, 687], [720, 736],
            [1013, 440], [1014, 489], [1014, 538], [1015, 587], [1015, 636], [1016, 685], [1016, 734],
            [828, 254], [757, 280], [899, 253], [970, 277],
            [687, 315], [564, 445], [514, 601], [1043, 311], [1166, 437], [1217, 596],
            [569, 761], [701, 900], [869, 945], [1038, 885], [1170, 754]
        ];
        const profiles = [
            [866, 255], [702, 300], [583, 421], [541, 584], [1030, 297], [1152, 415],
            [1197, 577], [587, 747], [708, 865], [872, 907], [1036, 861], [1155, 741]
        ];

        function place(groupId, symbol, points) {
            document.getElementById(groupId).innerHTML = points
                .map(([x, y]) => '<use href="#' + symbol + '" x="' + x + '" y="' + y + '"/>')
                .join('');
        }
        place('holes', 'm-hole', holes);
        place('profiles', 'm-profile', profiles);

        // Features in the order they were added to the design
        const features = [
            'move', 'copy', 'move', 'move', 'move', 'move', 'move', 'move', 'form',
            'corner', 'plane', 'sketch', 'extrude', 'extrude', 'corner', 'sketch', 'corner',
            'extrude', 'sketch', 'extrude', 'joint', 'move', 'extrude', 'move', 'move',
            'copy', 'scale', 'move', 'scale', 'move', 'extrude', 'sketch', 'extrude',
            'scale', 'move', 'scale', 'move', 'scale', 'move', 'extrude', 'sketch',
            'extrude', 'sketch', 'extrude', 'sketch-active'
        ];

        const list = document.getElementById('features');
        features.forEach((type, index) => {
            const item = document.createElement('li');
            if (index === features.length - 1) {
                item.className = 'current';
            }
            item.innerHTML = '<button aria-label="' + type + '">' + icon(type) + '</button>';
            list.appendChild(item);
        });
    </script>
</body>
</html>
```
FILE: styles.css
```css
* {
    box-sizing: border-box;
}
body {
    margin: 0;
    height: 100vh;
    display: flex;
    flex-direction: column;
    overflow: hidden;
    background-color: #f1f1f1;
    color: #333;
    font-family: "Liberation Sans", Arial, sans-serif;
    font-size: 16px;
    font-kerning: none;
    line-height: 20px;
}
button, input, select {
    font: inherit;
    font-kerning: none;
    color: inherit;
}
button {
    display: flex;
    align-items: center;
    justify-content: center;
    padding: 0;
    border: none;
    background: none;
}
h1, h2 {
    margin: 0;
    font-size: 16px;
    font-weight: normal;
}
svg {
    display: block;
    flex: none;
    overflow: visible;
}
.icon-library {
    position: absolute;
    width: 0;
    height: 0;
    overflow: hidden;
}
.caret {
    flex: none;
    border: 4px solid transparent;
    border-top: 7px solid #333;
    border-bottom: none;
}

/* title bar */
.title-bar {
    display: flex;
    align-items: center;
    flex: none;
    height: 34px;
    padding-left: 3px;
    background: linear-gradient(90deg, #f2f2fa, #edf3fa);
}
.title-bar h1 {
    flex: 1;
    margin-left: 8px;
    color: #111;
    font-family: "Open Sans", "Noto Sans", sans-serif;
    font-size: 17px;
}
.app-icon {
    width: 23px;
    height: 25px;
}
.app-letter {
    fill: #fff;
    font-size: 14px;
    font-weight: bold;
}
.app-sub {
    fill: #fff;
    font-size: 6px;
    font-weight: bold;
}
.window-controls {
    display: flex;
    margin-right: 2px;
}
.window-controls button {
    width: 70px;
    height: 34px;
}
.window-controls svg {
    width: 16px;
    height: 16px;
}

/* application bar */
.app-bar {
    display: flex;
    flex: none;
    height: 48px;
    padding-top: 6px;
    background-color: #cacaca;
}
.quick-access {
    display: flex;
    align-items: center;
    width: 290px;
    padding: 0 12px 6px 13px;
}
.quick-access button {
    gap: 9px;
}
.quick-access .caret {
    border-width: 7px 5px 0;
    border-top-color: #555;
}
.qa-file {
    margin-left: 28px;
}
.qa-save {
    margin-left: 28px;
}
.qa-undo {
    margin-left: 29px;
}
.qa-redo {
    margin-left: 18px;
}
.quick-access .qa-redo .caret {
    border-top-color: #888;
}
.home-tab {
    width: 58px;
    margin-right: 6px;
    padding: 4px 0 0 4px;
    border-radius: 5px 5px 0 0;
    background-color: #b8b8b8;
}
.doc-tab {
    position: relative;
    display: flex;
    flex: 1;
    align-items: center;
    justify-content: center;
    gap: 9px;
    padding: 4px 18px 0 0;
    border-radius: 5px 5px 0 0;
    background-color: #f1f1f1;
}
.doc-name {
    font-size: 18px;
}
.doc-close {
    position: absolute;
    top: 0;
    right: 6px;
    width: 22px;
    height: 28px;
    padding-top: 12px;
    border: 1px solid #ccc;
    border-radius: 4px;
    background-color: #fff;
}
.new-tab {
    width: 42px;
    margin-left: 6px;
    border-radius: 5px 5px 0 0;
    background-color: #b8b8b8;
}
.app-tools {
    display: flex;
    align-items: center;
    gap: 25px;
    padding: 0 20px 6px 18px;
}
.jobs {
    gap: 5px;
}
.bell {
    margin-left: 10px;
}
.avatar {
    margin-left: 7px;
}

/* ribbon */
.ribbon {
    display: flex;
    flex: none;
    height: 123px;
    border-bottom: 1px solid #ccc;
}
.workspace {
    gap: 9px;
    width: 165px;
    height: 91px;
    margin: 16px 8px 0 17px;
    padding-bottom: 2px;
    border: 2px solid #ccc;
    border-radius: 6px;
    font-weight: bold;
}
.ribbon-main {
    flex: 1;
    padding-right: 9px;
}
.ribbon-tabs {
    display: flex;
    gap: 34px;
    margin-left: 18px;
}
.ribbon-tabs a {
    height: 35px;
    padding: 7px 18px 0;
    color: #333;
    text-decoration: none;
}
.ribbon-tabs .wide {
    padding: 7px 20px 0;
}
.ribbon-tabs .active {
    border-bottom: 4px solid #1292d4;
    color: #1292d4;
}
.groups {
    display: grid;
    grid-template-columns: 400fr 339fr 210fr 156fr 156fr 126fr 210fr 124fr;
    margin-top: 1px;
}
.group {
    display: flex;
    flex-direction: column;
    align-items: center;
    position: relative;
    height: 81px;
}
.group + .group::before {
    content: "";
    position: absolute;
    left: 0;
    top: 4px;
    width: 1px;
    height: 76px;
    background-color: #ccc;
}
.tools {
    display: flex;
    gap: 9px;
    padding-left: 3px;
}
.tools button {
    width: 56px;
    height: 57px;
}
.tools svg {
    width: 48px;
    height: 48px;
}
.tools .active {
    background-color: #0a93d9;
}
.group-label {
    gap: 5px;
    height: 20px;
    margin-top: 5px;
}

/* viewport */
.viewport {
    position: relative;
    flex: 1;
    min-height: 0;
    border-top: 5px solid #f1f1f1;
    overflow: hidden;
}
.canvas {
    position: absolute;
    inset: 0;
    width: 100%;
    height: 100%;
    overflow: hidden;
}
.cube-face {
    fill: #85878c;
    font-size: 12px;
    font-weight: bold;
    text-anchor: middle;
    dominant-baseline: middle;
}
.axis {
    font-size: 13px;
    text-anchor: middle;
}
.axis-x {
    fill: #f08c90;
}
.axis-y {
    fill: #8be88b;
}
.panel-head {
    display: flex;
    align-items: center;
    flex: none;
    height: 37px;
    border: 1px solid #ccc;
    border-bottom-width: 2px;
    background-color: #f1f1f1;
    color: #666;
}

/* browser */
.browser {
    position: absolute;
    left: 6px;
    top: 6px;
    bottom: 6px;
    width: 449px;
    display: flex;
    flex-direction: column;
}
.browser .panel-head {
    padding: 1px 16px 0 6px;
}
.browser h2 {
    flex: 1;
    margin-left: 15px;
}
.browser .comments h2 {
    margin-left: 31px;
}
.tree-wrap {
    position: relative;
    flex: 1;
    min-height: 0;
    margin: 8px 0 35px;
    overflow: hidden;
}
.tree {
    margin: 0;
    padding: 0;
    list-style: none;
}
.tree li {
    display: flex;
    align-items: center;
    margin-bottom: 6px;
    padding-left: 55px;
}
.tree .sketch {
    padding-left: 108px;
}
.twisty {
    width: 10px;
    height: 14px;
    margin-right: 16px;
    clip-path: polygon(0 0, 20% 0, 100% 50%, 20% 100%, 0 100%);
    background: linear-gradient(90deg, #8a887f 40%, #5d5b52 40%);
}
.twisty.light {
    clip-path: polygon(0 0, 100% 50%, 0 100%);
    background: #444;
}
.twisty.light::before {
    content: "";
    width: 10px;
    height: 14px;
    clip-path: polygon(12% 16%, 82% 50%, 12% 84%);
    background-color: #f4f4f2;
}
.node {
    display: flex;
    align-items: center;
    height: 30px;
    background-color: #f1f1f1;
}
.eye {
    align-self: stretch;
    width: 38px;
    padding-right: 4px;
    border-right: 1px solid #ccc;
}
.eye svg {
    width: 24px;
    height: 24px;
}
.kind {
    width: 24px;
    height: 24px;
    margin: 0 2px 0 4px;
}
.node span {
    padding: 1px 17px 0 20px;
}
.linked {
    display: flex;
    align-items: center;
    align-self: stretch;
    padding: 0 7px 0 11px;
    border-right: 1px solid #ccc;
}
.linked svg {
    width: 26px;
    height: 22px;
}
.linked + span {
    padding-left: 12px;
}
.selected .node {
    background-color: #0a93d9;
    background-image: repeating-linear-gradient(135deg, #0a93d9 0 5px, #8093a8 5px 8px);
    background-position: bottom;
    background-size: 100% 6px;
    background-repeat: no-repeat;
    color: #fff;
    font-weight: bold;
}
.selected .node span {
    padding-right: 19px;
}
.selected .eye {
    background-color: #f1f1f1;
}
.tree-scroll {
    position: absolute;
    left: 6px;
    top: 0;
    bottom: 0;
    width: 9px;
    background-color: rgba(160, 160, 160, .5);
}
.tree-thumb {
    position: absolute;
    bottom: 0;
    width: 9px;
    height: 70px;
    border-radius: 4px;
    background-color: rgba(110, 110, 110, .8);
}

/* floating value next to the model */
.value-box {
    position: absolute;
    left: 1247px;
    top: 281px;
    display: flex;
    align-items: center;
    gap: 3px;
    height: 33px;
    background-color: #f1f1f1;
}
.grip {
    align-self: stretch;
    width: 18px;
    border-right: 1px solid #ccc;
    background-image: radial-gradient(#ccc 1px, transparent 1px);
    background-size: 5px 5px;
}
.value-box input {
    width: 105px;
    height: 29px;
    padding: 0 18px 0 0;
    border: 1px solid #bbb;
    background-color: #fff;
    text-align: right;
}
.value-box button {
    width: 33px;
    height: 33px;
}

/* extrude dialog */
.dialog {
    position: absolute;
    right: 7px;
    top: 126px;
    width: 373px;
    border: 1px solid #ccc;
    border-width: 0 1px 2px;
    background-color: #f1f1f1;
}
.dialog .panel-head {
    margin: 0 -1px;
    padding: 1px 5px 0 16px;
}
.dialog h2 {
    flex: 1;
    margin-left: 6px;
}
.fields {
    padding-top: 1px;
}
.field {
    display: flex;
    align-items: center;
    height: 45px;
    padding-left: 18px;
}
.name {
    width: 108px;
}
.type {
    width: 35px;
    height: 40px;
    margin-right: 8px;
}
.type svg {
    width: 24px;
    height: 24px;
}
.type.active, .selection {
    background-color: #0a93d9;
}
.selection {
    gap: 6px;
    width: 126px;
    height: 40px;
    color: #fff;
}
.clear {
    margin-left: 17px;
}
.dropdown {
    position: relative;
    width: 198px;
    height: 40px;
}
.dropdown svg {
    position: absolute;
    left: 5px;
    top: 8px;
    width: 24px;
    height: 24px;
}
.dropdown select {
    width: 100%;
    height: 100%;
    padding: 0 24px 0 35px;
    border: 1px solid #ccc;
    border-radius: 0;
    background-color: #fff;
    appearance: none;
}
.dropdown .caret {
    position: absolute;
    right: 8px;
    top: 17px;
}
.field input {
    width: 198px;
    height: 38px;
    padding: 0 5px;
    border: 1px solid #ccc;
    background-color: #fff;
}
.fields hr {
    margin: 8px 19px 6px 1px;
    border: none;
    border-top: 1px solid #bbb;
}
.section-toggle {
    gap: 15px;
    height: 46px;
    padding-left: 13px;
    font-weight: bold;
}
.dialog-foot {
    display: flex;
    align-items: center;
    gap: 15px;
    height: 54px;
    padding: 2px 16px 0 12px;
    border-top: 1px solid #ccc;
}
.dialog-foot svg {
    margin-right: auto;
}
.dialog-foot button {
    width: 90px;
    height: 30px;
    border: 1px solid #bbb;
    background-color: #e8e8e8;
    color: #666;
}
.tooltip {
    position: absolute;
    right: 358px;
    top: 571px;
    height: 27px;
    padding: 2px 5px;
    border: 1px solid #ddd;
    border-bottom-color: #777;
    background-color: #f4f4f4;
    color: #111;
    font-family: "Open Sans", "Noto Sans", sans-serif;
    font-size: 17px;
}

/* navigation bar */
.nav-bar {
    position: absolute;
    left: 50%;
    bottom: 9px;
    display: flex;
    align-items: center;
    gap: 15px;
    height: 36px;
    margin-left: -177px;
    padding: 0 5px;
    background-color: #f1f1f1;
}
.nav-bar button {
    gap: 6px;
}
.nav-bar .tight {
    gap: 4px;
}
.nav-bar svg {
    width: 24px;
    height: 24px;
}
.nav-bar .caret {
    margin-right: -4px;
}
.status {
    position: absolute;
    right: 26px;
    bottom: 13px;
    font-weight: bold;
}

/* timeline */
.timeline {
    position: relative;
    display: flex;
    align-items: center;
    flex: none;
    height: 75px;
    padding-top: 10px;
    border-top: 1px solid #ccc;
}
.playback {
    display: flex;
    gap: 17px;
    margin: 0 19px 0 16px;
}
.playback svg {
    width: 20px;
    height: 20px;
}
.features {
    display: flex;
    align-self: flex-start;
    height: 46px;
    margin: 6px 0 0;
    padding: 0 0 0 10px;
    border-bottom: 3px solid #ccc;
    list-style: none;
}
.features li {
    width: 36px;
    padding-bottom: 8px;
    background: linear-gradient(#ccc, #ccc) 18px bottom / 2px 9px no-repeat;
}
.features li:last-child {
    margin-right: -17px;
}
.features button {
    width: 36px;
    height: 35px;
}
.features svg {
    width: 24px;
    height: 24px;
}
.features .current {
    position: relative;
}
.current button {
    background-color: #0a93d9;
}
/* playhead */
.current::before {
    content: "";
    position: absolute;
    left: 27px;
    top: -3px;
    width: 18px;
    height: 12px;
    clip-path: polygon(0 0, 100% 0, 100% 40%, 50% 100%, 0 40%);
    background-color: #555;
}
.current::after {
    content: "";
    position: absolute;
    left: 35px;
    top: 0;
    width: 3px;
    height: 46px;
    background-color: #555;
}
.settings {
    margin: 0 20px 0 auto;
}
.timeline-scroll {
    position: absolute;
    right: 9px;
    top: 0;
    width: 115px;
    height: 10px;
    border-radius: 0 0 4px 4px;
    background-color: #c8c8c8;
}
```
